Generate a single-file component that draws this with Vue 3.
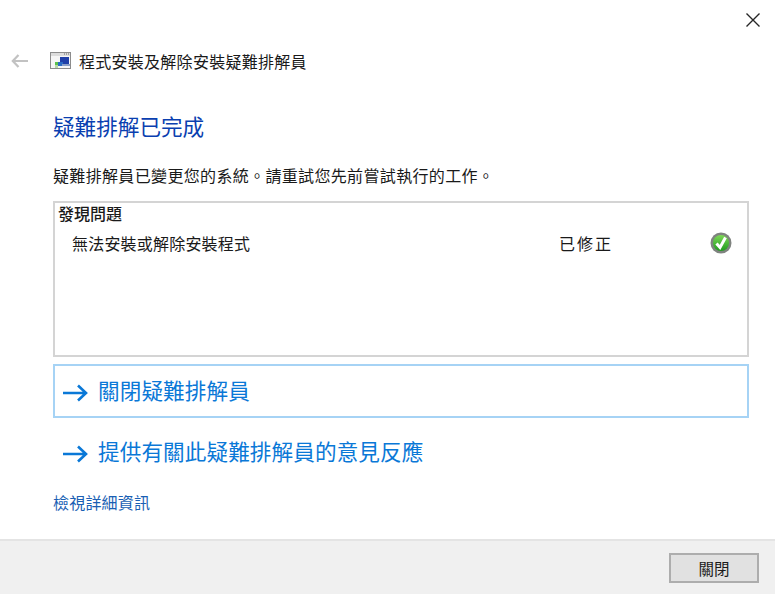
<script setup>
const links = [
  { text: '關閉疑難排解員', boxed: true },
  { text: '提供有關此疑難排解員的意見反應', boxed: false }
]
</script>

<template>
  <div class="window">
    <div class="close-row">
      <svg class="close" width="16" height="16" viewBox="0 0 16 16">
        <path d="M1.5 1.5 L14.5 14.5 M14.5 1.5 L1.5 14.5" stroke="#262626" stroke-width="1.4" fill="none" />
      </svg>
    </div>
    <div class="nav">
      <svg class="back" width="18" height="14" viewBox="0 0 18 14">
        <path d="M17 7 H2 M7.5 1 L1.8 7 L7.5 13" stroke="#c2c2c2" stroke-width="2.2" fill="none" />
      </svg>
      <svg class="app-icon" width="22" height="18" viewBox="0 0 22 18">
        <rect x="0.5" y="0.5" width="20" height="16" fill="#f6f6f6" stroke="#8c8c8c" />
        <rect x="1" y="1" width="19" height="3" fill="#dcdcdc" />
        <path d="M14 2h1M16 2h1M18 2h1" stroke="#666" />
        <rect x="10" y="5" width="9" height="7" fill="#1f3fa8" />
        <rect x="8" y="10" width="5" height="4" fill="#2a6bc4" />
        <rect x="12" y="12" width="8" height="2" fill="#8a9fc8" />
        <rect x="5" y="10" width="3" height="3" fill="#5cc24c" />
        <rect x="5" y="13" width="3" height="3" fill="#b8d8a8" />
      </svg>
      <span class="nav-title">程式安裝及解除安裝疑難排解員</span>
    </div>
    <main class="content">
      <h1 class="heading">疑難排解已完成</h1>
      <p class="desc">疑難排解員已變更您的系統。請重試您先前嘗試執行的工作。</p>
      <section class="results">
        <div class="results-head">發現問題</div>
        <div class="results-row">
          <span class="problem">無法安裝或解除安裝程式</span>
          <span class="status">已修正</span>
          <svg class="check" width="22" height="22" viewBox="0 0 22 22">
            <defs>
              <linearGradient id="g" x1="0" y1="0" x2="0" y2="1">
                <stop offset="0" stop-color="#7ed957" />
                <stop offset="1" stop-color="#1f9a1f" />
              </linearGradient>
            </defs>
            <circle cx="11" cy="11" r="10.5" fill="#7f837f" />
            <circle cx="11" cy="11" r="8" fill="url(#g)" />
            <path d="M6.5 11.5 L10 15.5 L15.5 5.5" stroke="#fff" stroke-width="3" fill="none" />
          </svg>
        </div>
      </section>
      <div class="links">
        <a v-for="l in links" :key="l.text" class="link" :class="{ boxed: l.boxed }">
          <svg class="arrow" width="26" height="18" viewBox="0 0 26 18">
            <path d="M1 9 H24 M16 1.5 L24 9 L16 16.5" stroke="#0a78d7" stroke-width="2.6" fill="none" />
          </svg>
          <span class="link-text">{{ l.text }}</span>
        </a>
      </div>
      <a class="details">檢視詳細資訊</a>
    </main>
    <footer class="footer">
      <button class="btn">關閉</button>
    </footer>
  </div>
</template>

<style scoped>
.window {
  width: 775px;
  height: 596px;
  background: #fff;
  display: flex;
  flex-direction: column;
  font-family: "Noto Sans CJK TC", "Liberation Sans", sans-serif;
  color: #1a1a1a;
  box-sizing: border-box;
  overflow: hidden;
}
.close-row {
  height: 48px;
  display: flex;
  justify-content: flex-end;
  align-items: flex-start;
  padding: 12px 14px 0 0;
  box-sizing: border-box;
}
.close { display: block; }
.nav {
  display: flex;
  align-items: center;
  height: 26px;
  padding-left: 11px;
}
.back { margin-right: 21px; }
.app-icon { margin-right: 7px; }
.nav-title { font-size: 16px; letter-spacing: 0.27px; line-height: 26px; }
.content {
  flex: 1;
  padding: 0 26px 0 53px;
  display: flex;
  flex-direction: column;
}
.heading {
  margin: 37px 0 0;
  font-size: 21.6px;
  line-height: 30px;
  font-weight: 400;
  color: #0a3fb0;
}
.desc {
  margin: 22px 0 0;
  font-size: 16px;
  letter-spacing: 0.34px;
  line-height: 24px;
}
.results {
  margin-top: 14px;
  height: 156px;
  border: 2px solid #d4d4d4;
  box-sizing: border-box;
  padding: 0 15px 0 3px;
}
.results-head { font-size: 16px; line-height: 20px; font-weight: 500; }
.results-row {
  display: flex;
  align-items: center;
  height: 34px;
  margin-top: 3px;
  padding-left: 14px;
  font-size: 16px;
  letter-spacing: 0.2px;
}
.problem { width: 487px; }
.status { flex: 1; letter-spacing: 2px; }
.links { display: flex; flex-direction: column; margin-top: 7px; }
.link {
  display: flex;
  align-items: center;
  height: 54px;
  padding-left: 7px;
  box-sizing: border-box;
  border: 2px solid transparent;
  font-size: 21.6px;
  letter-spacing: 0.1px;
  color: #0a78d7;
  margin-bottom: 7px;
}
.link.boxed { border-color: #a6d3f5; }
.arrow { margin-right: 10px; margin-top: 4px; }
.link-text { margin-bottom: 4px; }
.details {
  margin-top: 4px;
  font-size: 16px;
  letter-spacing: 0.2px;
  line-height: 24px;
  color: #1a5fb4;
}
.footer {
  height: 55px;
  margin-bottom: 2px;
  background: #f0f0f0;
  border-top: 2px solid #e4e4e4;
  box-sizing: border-box;
  display: flex;
  justify-content: flex-end;
  align-items: center;
  padding-right: 16px;
}
.btn {
  width: 90px;
  height: 30px;
  background: #e1e1e1;
  border: 2px solid #adadad;
  font-family: inherit;
  font-size: 15.5px;
  color: #1a1a1a;
  padding: 0;
}
</style>
